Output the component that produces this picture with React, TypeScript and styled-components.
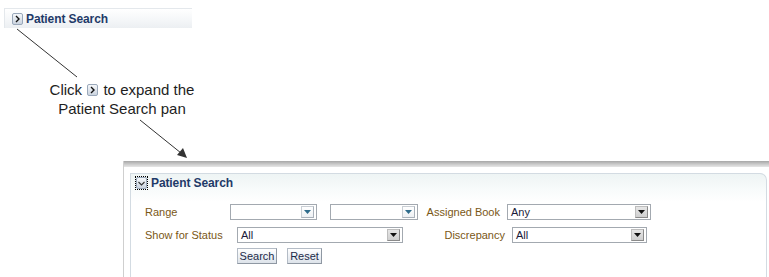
import React from "react";
import styled, { createGlobalStyle } from "styled-components";

const Global = createGlobalStyle`
  html, body { margin: 0; padding: 0; background: #ffffff; }
  body { font-family: "Liberation Sans", Arial, sans-serif; }
`;

const Page = styled.div`
  position: relative;
  width: 769px;
  height: 277px;
  overflow: hidden;
  background: #ffffff;
`;

const TopPanel = styled.div`
  margin: 8px 0 0 4px;
  width: 188px;
  height: 20px;
  box-sizing: border-box;
  display: flex;
  align-items: center;
  padding-left: 7px;
  border-top: 1px solid #e4e8ec;
  border-left: 1px solid #e4e8ec;
  background: linear-gradient(#ffffff, #f4f6f8 60%, #eceff2);
`;

const ToggleBox = styled.span<{ $focus?: boolean }>`
  display: inline-flex;
  align-items: center;
  justify-content: center;
  width: 13px;
  height: 14px;
  box-sizing: border-box;
  outline: ${(p) => (p.$focus ? "1px dotted #000" : "none")};
  outline-offset: -1px;
`;

const HeaderTitle = styled.span`
  margin-left: 3px;
  font-family: "Liberation Sans", Arial, sans-serif;
  font-weight: bold;
  font-size: 12px;
  color: #1f3a68;
  letter-spacing: -0.1px;
`;

const Callout = styled.div`
  margin: 53px 0 0 37px;
  width: 170px;
  text-align: center;
  font-family: "Liberation Sans", Arial, sans-serif;
  font-size: 15px;
  line-height: 18px;
  color: #1e1e1e;
`;

const InlineIcon = styled.span`
  display: inline-block;
  vertical-align: -1px;
  margin: 0 1px;
`;

const BottomOuter = styled.div`
  margin: 43px 0 0 123px;
  height: 120px;
  padding-top: 6px;
  border-left: 1px solid #cfcfcf;
  background: linear-gradient(#a6a6a6, #c8c8c8 50%, #e6e6e6) top left / 100% 6px no-repeat;
`;

const InnerPanel = styled.div`
  margin: 6px 2px 0 6px;
  height: 110px;
  border: 1px solid #d3dbe2;
  border-bottom: none;
  border-top-right-radius: 7px;
  background: linear-gradient(#eef4f4, #f8fbfb 16px, #ffffff 28px);
`;

const PanelHeader = styled.div`
  display: flex;
  align-items: center;
  height: 16px;
  margin: 1px 0 0 4px;
`;

const Form = styled.div`
  padding-left: 14px;
  font-family: "Liberation Sans", Arial, sans-serif;
  font-size: 11px;
`;

const Row = styled.div<{ $top: number }>`
  display: flex;
  align-items: center;
  height: 16px;
  margin-top: ${(p) => p.$top}px;
`;

const Label = styled.span<{ $w: number; $right?: boolean; $gap?: number }>`
  width: ${(p) => p.$w}px;
  flex: none;
  text-align: ${(p) => (p.$right ? "right" : "left")};
  margin-right: ${(p) => p.$gap ?? 0}px;
  color: #7a5716;
  white-space: nowrap;
`;

const SelectBox = styled.div<{ $w: number; $ml?: number }>`
  position: relative;
  width: ${(p) => p.$w}px;
  height: 16px;
  flex: none;
  box-sizing: border-box;
  margin-left: ${(p) => p.$ml ?? 0}px;
  border: 1px solid #a3a9b0;
  background: #ffffff;
  display: flex;
  align-items: center;
  padding-left: 3px;
  color: #1b1b3a;
`;

const DropBtn = styled.span<{ $blue?: boolean }>`
  position: absolute;
  right: 2px;
  top: 1px;
  width: 13px;
  height: 12px;
  box-sizing: border-box;
  border: 1px solid ${(p) => (p.$blue ? "#a9b1ba" : "#8a8a8a")};
  border-top-color: ${(p) => (p.$blue ? "#c9ced4" : "#bdbdbd")};
  border-left-color: ${(p) => (p.$blue ? "#c9ced4" : "#bdbdbd")};
  background: ${(p) => (p.$blue ? "linear-gradient(#ffffff, #eef1f4)" : "linear-gradient(#e6e6e6, #cfcfcf)")};
  display: flex;
  align-items: center;
  justify-content: center;
`;

const Button = styled.button<{ $w: number; $ml?: number }>`
  width: ${(p) => p.$w}px;
  height: 16px;
  margin-left: ${(p) => p.$ml ?? 0}px;
  padding: 0;
  box-sizing: border-box;
  border: 1px solid #b4bcc6;
  border-right-color: #8f98a3;
  border-bottom-color: #8f98a3;
  background: linear-gradient(#ffffff, #eef1f5 50%, #dde3ea);
  font-family: "Liberation Sans", Arial, sans-serif;
  font-size: 11px;
  color: #1c2a48;
  line-height: 14px;
`;

const Overlay = styled.svg`
  position: absolute;
  left: 0;
  top: 0;
  pointer-events: none;
`;

function ToggleIcon({ dir }: { dir: "right" | "down" }) {
  return (
    <svg width="11" height="12" viewBox="0 0 11 12">
      <defs>
        <linearGradient id={`tg-${dir}`} x1="0" y1="0" x2="0" y2="1">
          <stop offset="0" stopColor="#f7f9fb" />
          <stop offset="1" stopColor="#c9d2de" />
        </linearGradient>
      </defs>
      <rect x="0.5" y="0.5" width="10" height="11" rx="1.5" fill={`url(#tg-${dir})`} stroke="#9aa8ba" />
      {dir === "right" ? (
        <polyline points="4,3 7,6 4,9" fill="none" stroke="#111" strokeWidth="1.4" />
      ) : (
        <polyline points="2.5,5 5.5,8 8.5,5" fill="none" stroke="#333" strokeWidth="1.1" />
      )}
    </svg>
  );
}

function Arrow({ blue }: { blue?: boolean }) {
  return (
    <svg width="7" height="4" viewBox="0 0 7 4">
      <polygon points="0,0 7,0 3.5,4" fill={blue ? "#2f6c8c" : "#111"} />
    </svg>
  );
}

function Select({ w, ml, value, blue }: { w: number; ml?: number; value?: string; blue?: boolean }) {
  return (
    <SelectBox $w={w} $ml={ml}>
      {value}
      <DropBtn $blue={blue}>
        <Arrow blue={blue} />
      </DropBtn>
    </SelectBox>
  );
}

export default function App() {
  return (
    <Page>
      <Global />
      <TopPanel>
        <ToggleIcon dir="right" />
        <HeaderTitle>Patient Search</HeaderTitle>
      </TopPanel>

      <Callout>
        Click{" "}
        <InlineIcon>
          <ToggleIcon dir="right" />
        </InlineIcon>{" "}
        to expand the
        <br />
        Patient Search pan
      </Callout>

      <BottomOuter>
        <InnerPanel>
          <PanelHeader>
            <ToggleBox $focus>
              <ToggleIcon dir="down" />
            </ToggleBox>
            <HeaderTitle>Patient Search</HeaderTitle>
          </PanelHeader>
          <Form>
            <Row $top={13}>
              <Label $w={85}>Range</Label>
              <Select w={87} blue />
              <Select w={88} ml={13} blue />
              <Label $w={82} $right $gap={7}>
                Assigned Book
              </Label>
              <Select w={144} value="Any" />
            </Row>
            <Row $top={7}>
              <Label $w={92}>Show for Status</Label>
              <Select w={166} value="All" />
              <Label $w={102} $right $gap={7}>
                Discrepancy
              </Label>
              <Select w={135} value="All" />
            </Row>
            <Row $top={5}>
              <Button $w={40} $ml={92}>
                Search
              </Button>
              <Button $w={35} $ml={10}>
                Reset
              </Button>
            </Row>
          </Form>
        </InnerPanel>
      </BottomOuter>

      <Overlay width="769" height="277" viewBox="0 0 769 277">
        <line x1="17" y1="29" x2="77" y2="77" stroke="#333" strokeWidth="1" />
        <line x1="140" y1="120" x2="181" y2="153" stroke="#333" strokeWidth="1" />
        <polygon points="187,158 177,155 183,148" fill="#333" />
      </Overlay>
    </Page>
  );
}
